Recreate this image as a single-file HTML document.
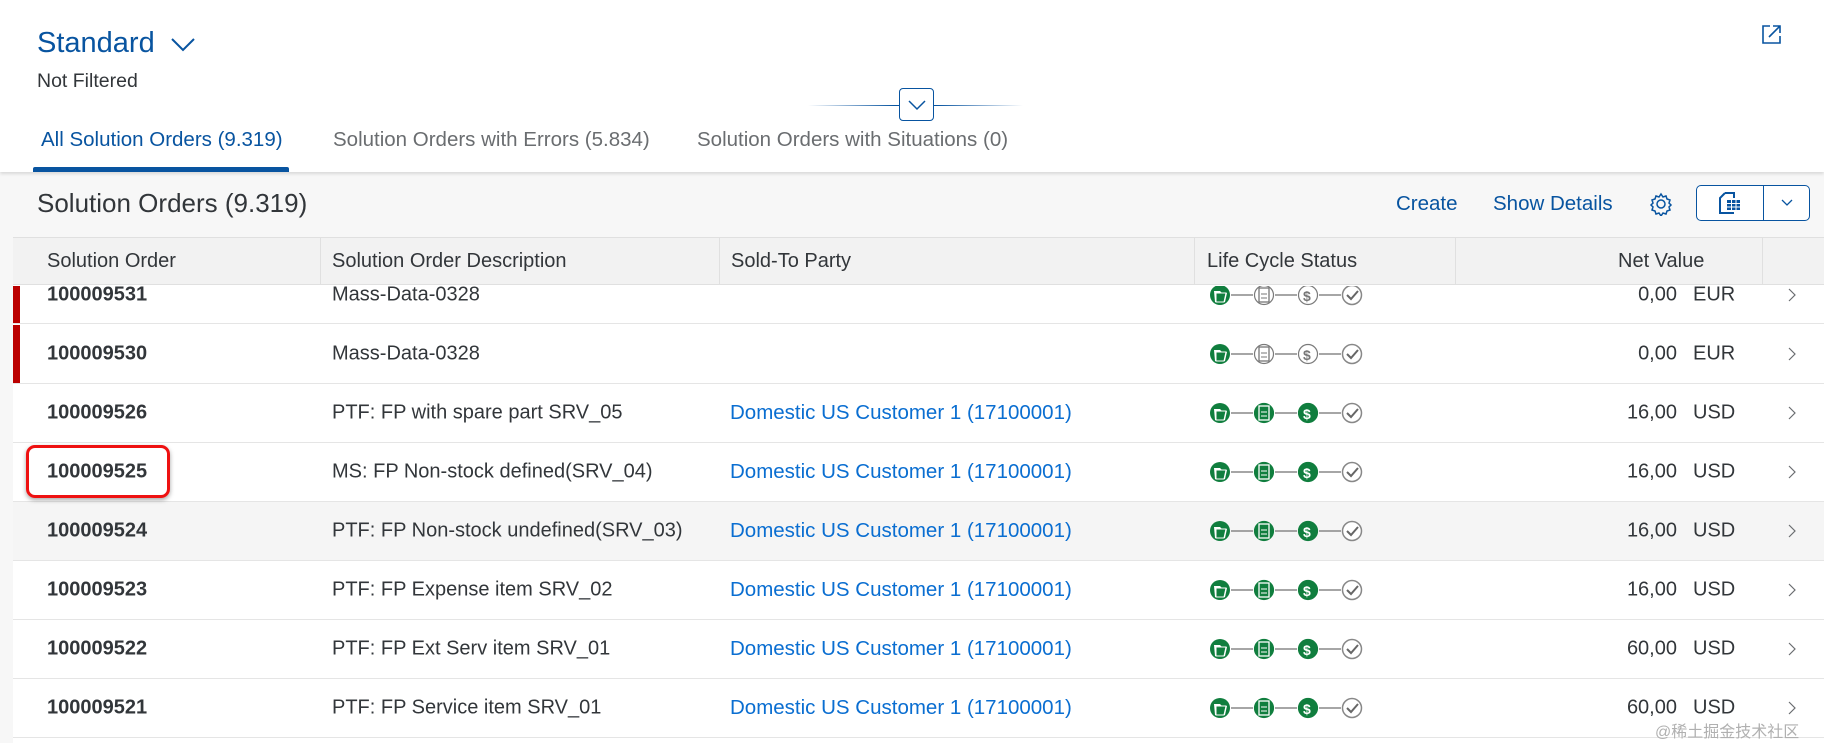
<!DOCTYPE html>
<html><head><meta charset="utf-8"><style>
*{margin:0;padding:0;box-sizing:border-box}
body{width:1824px;height:743px;overflow:hidden;background:#f7f7f7;font-family:"Liberation Sans",Arial,sans-serif;color:#32363a;position:relative}
.a{position:absolute;white-space:nowrap}
.hdr{position:absolute;left:0;top:0;width:1824px;height:172px;background:#fff;box-shadow:0 2px 3px rgba(0,0,0,.12)}
.tbl{position:absolute;left:13px;top:237px;width:1811px;height:506px;background:#fff}
.th{position:absolute;top:237px;height:48px;background:#f2f2f2;border-bottom:1px solid #e0e0e0;border-top:1px solid #e0e0e0}
.row{position:absolute;left:13px;width:1811px;height:59px;border-bottom:1px solid #e5e5e5;background:#fff;overflow:hidden}
.cell{position:absolute;font-size:20px;top:50%;transform:translateY(-50%)}
.r0 .cell{top:9px}
.b{font-weight:bold;left:34px}
.lnk{color:#0a6ed1;font-size:20.5px}
</style></head><body>
<div class="hdr"></div>
<div class="a" style="left:37px;top:27px;font-size:29px;color:#0854a0">Standard</div>
<svg class="a" style="left:170px;top:36px" width="26" height="18"><path d="M2 3 L13 14 L24 3" fill="none" stroke="#0854a0" stroke-width="2"/></svg>
<div class="a" style="left:37px;top:70px;font-size:19.5px">Not Filtered</div>
<svg class="a" style="left:1760px;top:22px" width="24" height="24"><path d="M10 4 H3 V21 H20 V14" fill="none" stroke="#0854a0" stroke-width="1.6"/><path d="M9 15 L20 4 M13 4 H20 V11" fill="none" stroke="#0854a0" stroke-width="1.6"/></svg>
<div class="a" style="left:808px;top:105px;width:215px;height:1px;background:linear-gradient(90deg,#fff,#0854a0 40%,#0854a0 60%,#fff)"></div>
<div class="a" style="left:899px;top:88px;width:35px;height:33px;background:#fff;border:1px solid #0854a0;border-radius:4px"></div>
<svg class="a" style="left:906px;top:98px" width="22" height="14"><path d="M3 3 L11 11 L19 3" fill="none" stroke="#0854a0" stroke-width="1.5"/></svg>
<div class="a" style="left:41px;top:128px;font-size:20.5px;color:#0854a0">All Solution Orders (9.319)</div>
<div class="a" style="left:333px;top:128px;font-size:20.5px;color:#6a6d70">Solution Orders with Errors (5.834)</div>
<div class="a" style="left:697px;top:128px;font-size:20.5px;color:#6a6d70">Solution Orders with Situations (0)</div>
<div class="a" style="left:33px;top:167px;width:256px;height:5px;background:#0854a0;border-radius:2px 2px 0 0"></div>
<div class="a" style="left:37px;top:188px;font-size:26px">Solution Orders (9.319)</div>
<div class="a" style="left:1396px;top:192px;font-size:20.5px;color:#0854a0">Create</div>
<div class="a" style="left:1493px;top:192px;font-size:20.5px;color:#0854a0">Show Details</div>
<svg class="a" style="left:1649px;top:192px" width="24" height="24" viewBox="0 0 24 24"><path d="M12 2l2 3 3-1 1 3 3 1-1 3 2 2-2 2 1 3-3 1-1 3-3-1-2 3-2-3-3 1-1-3-3-1 1-3-2-2 2-2-1-3 3-1 1-3 3 1z" fill="none" stroke="#0854a0" stroke-width="1.5"/><circle cx="12" cy="12" r="4" fill="none" stroke="#0854a0" stroke-width="1.5"/></svg>
<div class="a" style="left:1696px;top:185px;width:114px;height:36px;border:1px solid #0854a0;border-radius:5px;background:#fff"></div>
<div class="a" style="left:1763px;top:186px;width:1px;height:34px;background:#0854a0"></div>
<svg class="a" style="left:1717px;top:191px" width="26" height="24"><path d="M8 2 H17 V7 M8 2 L3 7 V22 H17" fill="none" stroke="#0854a0" stroke-width="2"/><rect x="10" y="9" width="13" height="10" fill="#0854a0"/><path d="M10 12.5H23M10 16H23M14.5 9V19M19 9V19" stroke="#fff" stroke-width="1"/></svg>
<svg class="a" style="left:1779px;top:197px" width="16" height="12"><path d="M3 3 L8 8 L13 3" fill="none" stroke="#0854a0" stroke-width="1.3"/></svg>

<div class="tbl"></div>
<div class="th" style="left:13px;width:1811px"></div>
<div class="a" style="left:320px;top:238px;width:1px;height:47px;background:#e0e0e0"></div>
<div class="a" style="left:719px;top:238px;width:1px;height:47px;background:#e0e0e0"></div>
<div class="a" style="left:1194px;top:238px;width:1px;height:47px;background:#e0e0e0"></div>
<div class="a" style="left:1455px;top:238px;width:1px;height:47px;background:#e0e0e0"></div>
<div class="a" style="left:1762px;top:238px;width:1px;height:47px;background:#e0e0e0"></div>
<div class="a" style="left:47px;top:250px;font-size:20px">Solution Order</div>
<div class="a" style="left:332px;top:250px;font-size:20px">Solution Order Description</div>
<div class="a" style="left:731px;top:250px;font-size:20px">Sold-To Party</div>
<div class="a" style="left:1207px;top:250px;font-size:20px">Life Cycle Status</div>
<div class="a" style="left:1618px;top:250px;font-size:20px">Net Value</div>

<div id="rows"></div>
<script>
const rows=[
[286,38,"100009531","Mass-Data-0328","","0,00","EUR",1,0],
[325,59,"100009530","Mass-Data-0328","","0,00","EUR",1,0],
[384,59,"100009526","PTF: FP with spare part SRV_05","Domestic US Customer 1 (17100001)","16,00","USD",0,0],
[443,59,"100009525","MS: FP Non-stock defined(SRV_04)","Domestic US Customer 1 (17100001)","16,00","USD",0,0],
[502,59,"100009524","PTF: FP Non-stock undefined(SRV_03)","Domestic US Customer 1 (17100001)","16,00","USD",0,1],
[561,59,"100009523","PTF: FP Expense item SRV_02","Domestic US Customer 1 (17100001)","16,00","USD",0,0],
[620,59,"100009522","PTF: FP Ext Serv item SRV_01","Domestic US Customer 1 (17100001)","60,00","USD",0,0],
[679,59,"100009521","PTF: FP Service item SRV_01","Domestic US Customer 1 (17100001)","60,00","USD",0,0]];
let h="";
rows.forEach((r,i)=>{
 const g=r[7]?"#7a7a7a":"#107e3e";
 const f=r[7]?"none":"#107e3e";
 const w=r[7]?'#777':'#fff';
 const ic=`<svg class="cell" style="left:1197px" width="160" height="24" viewBox="0 0 160 24">
 <circle cx="10" cy="12" r="10" fill="#107e3e"/><path d="M4 8h6l2 2h5l-2 9H5z" fill="#fff"/><path d="M6 10h10l-2 9H6z" fill="#107e3e" stroke="#fff"/>
 <line x1="21" y1="12" x2="43" y2="12" stroke="#888" stroke-width="1.5"/>
 <circle cx="54" cy="12" r="9.5" fill="${f}" stroke="${g}" stroke-width="1.2"/><rect x="49" y="5" width="10" height="14" fill="none" stroke="${w}" stroke-width="1.3"/><path d="M51 11h6M51 15h6" stroke="${w}"/>
 <line x1="65" y1="12" x2="87" y2="12" stroke="#888" stroke-width="1.5"/>
 <circle cx="98" cy="12" r="9.5" fill="${f}" stroke="${g}" stroke-width="1.2"/><text x="93" y="18" font-size="14" font-weight="bold" font-family="Liberation Sans" fill="${w}">$</text>
 <line x1="109" y1="12" x2="131" y2="12" stroke="#888" stroke-width="1.5"/>
 <circle cx="142" cy="12" r="9.5" fill="#fff" stroke="#888" stroke-width="1.5"/><path d="M137 12l4 4 7-8" fill="none" stroke="#666" stroke-width="2"/></svg>`;
 h+=`<div class="row ${i==0?'r0':''}" style="top:${r[0]}px;height:${r[1]}px;${r[8]?'background:#f5f5f5':''}">
 ${r[7]?'<div style="position:absolute;left:0;top:0;width:7px;height:100%;background:#bb0000"></div>':''}
 <div class="cell b">${r[2]}</div><div class="cell" style="left:319px">${r[3]}</div>
 <div class="cell lnk" style="left:717px">${r[4]}</div>${ic}
 <div class="cell" style="right:147px">${r[5]}</div><div class="cell" style="left:1680px">${r[6]}</div>
 <svg class="cell" style="left:1774px" width="10" height="16"><path d="M2 2l6 6-6 6" fill="none" stroke="#6a6d70" stroke-width="1.2"/></svg></div>`;
});
document.getElementById("rows").outerHTML=h;
</script>
<div class="a" style="left:26px;top:445px;width:144px;height:53px;border:3px solid #ee1111;border-radius:9px;box-shadow:0 2px 5px rgba(0,0,0,.35)"></div>
<div class="a" style="left:1655px;top:718px;font-size:16px;color:#b0b0b0;font-family:'Liberation Sans','Noto Sans CJK SC',sans-serif">@稀土掘金技术社区</div>
</body></html>
